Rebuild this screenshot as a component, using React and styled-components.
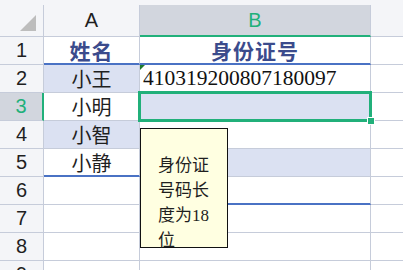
import React from "react";
import styled, { createGlobalStyle, css } from "styled-components";

const Global = createGlobalStyle`
  html, body {
    margin: 0;
    padding: 0;
    background: #ffffff;
    overflow: hidden;
  }
`;

const GRID = "#c6ccda";
const GREEN = "#21b07a";
const BAND = "#dbe1f2";
const EDGE = "#4a72c4";

const Sheet = styled.div`
  position: relative;
  width: 403px;
  height: 270px;
  background: #ffffff;
  overflow: hidden;
`;

const TopStrip = styled.div`
  height: 5px;
  background: #f4f5f8;
`;

const Grid = styled.div`
  display: grid;
  grid-template-columns: 44px 96px 231px 32px;
  grid-template-rows: 32px repeat(9, 28px);
`;

const Corner = styled.div`
  position: relative;
  background: #f4f5f8;
  border-right: 1px solid ${GRID};
  border-bottom: 1px solid ${GRID};
  svg {
    position: absolute;
    right: 7px;
    bottom: 5px;
  }
`;

const ColHead = styled.div`
  display: flex;
  align-items: center;
  justify-content: center;
  background: ${(p) => (p.$active ? "#d2d6de" : "#f4f5f8")};
  color: ${(p) => (p.$active ? GREEN : "#1f1f1f")};
  border-right: 1px solid ${GRID};
  border-bottom: ${(p) => (p.$active ? `2px solid ${GREEN}` : `1px solid ${GRID}`)};
  font-family: "Liberation Sans", Arial, sans-serif;
  font-size: 20px;
  ${(p) => p.$blank && css`border-right: none;`}
`;

const RowHead = styled.div`
  display: flex;
  align-items: center;
  justify-content: center;
  background: ${(p) => (p.$active ? "#d2d6de" : "#f4f5f8")};
  color: ${(p) => (p.$active ? GREEN : "#1f1f1f")};
  border-right: ${(p) => (p.$active ? `2px solid ${GREEN}` : `1px solid ${GRID}`)};
  border-bottom: 1px solid ${GRID};
  font-family: "Liberation Sans", Arial, sans-serif;
  font-size: 20px;
  box-sizing: border-box;
`;

const Cell = styled.div`
  position: relative;
  box-sizing: border-box;
  display: flex;
  align-items: center;
  justify-content: ${(p) => (p.$left ? "flex-start" : "center")};
  padding-left: ${(p) => (p.$left ? "3px" : "0")};
  background: ${(p) => (p.$band ? BAND : "#ffffff")};
  border-right: 1px solid ${GRID};
  border-bottom: 1px solid ${(p) => (p.$edge ? EDGE : GRID)};
  ${(p) => p.$edge && css`border-bottom-width: 2px;`}
  font-family: "Noto Sans CJK SC", sans-serif;
  font-size: 20px;
  color: #1f1f1f;
  white-space: nowrap;
  ${(p) => p.$title && css`
    font-weight: 700;
    color: #3b4b8c;
    font-size: 21px;
    letter-spacing: 1px;
  `}
  ${(p) => p.$num && css`
    font-family: "Liberation Serif", "Times New Roman", serif;
    font-size: 21.5px;
    color: #111111;
  `}
  ${(p) => p.$outer && css`border-right: none;`}
  ${(p) => p.$active && css`z-index: 2;`}
`;

const Selection = styled.div`
  position: absolute;
  left: -2px;
  top: -2px;
  right: -2px;
  bottom: -2px;
  border: 3px solid ${GREEN};
  pointer-events: none;
`;

const Handle = styled.div`
  position: absolute;
  right: -6px;
  bottom: -6px;
  width: 6px;
  height: 6px;
  background: ${GREEN};
  border: 1px solid #ffffff;
`;

const Marker = styled.div`
  position: absolute;
  left: 0;
  top: 0;
  width: 0;
  height: 0;
  border-top: 5px solid #1f7a2e;
  border-right: 5px solid transparent;
`;

const Comment = styled.div`
  position: absolute;
  z-index: 3;
  left: 140px;
  top: 128px;
  width: 88px;
  height: 120px;
  box-sizing: border-box;
  padding: 24px 14px 0 17px;
  background: #ffffe1;
  border: 1px solid #111111;
  font-family: "Liberation Serif", "Noto Sans CJK SC", serif;
  font-size: 17px;
  line-height: 25px;
  color: #1f1f1f;
  word-break: break-all;
`;

const CommentText = styled.div`
  width: 55px;
`;

const rows = [
  { n: 1, a: "姓名", b: "", aBand: false, bBand: false, title: true, aEdge: true, bEdge: true },
  { n: 2, a: "小王", b: "410319200807180097", aBand: true, bBand: false, marker: true },
  { n: 3, a: "小明", b: "", aBand: false, bBand: true, active: true },
  { n: 4, a: "小智", b: "", aBand: true, bBand: false },
  { n: 5, a: "小静", b: "", aBand: false, bBand: true, aEdge: true },
  { n: 6, a: "", b: "", bEdge: true },
  { n: 7, a: "", b: "" },
  { n: 8, a: "", b: "" },
  { n: 9, a: "", b: "" },
];

const App = () => {
  return (
    <Sheet>
      <Global />
      <TopStrip />
      <Grid>
        <Corner>
          <svg width="16" height="16" viewBox="0 0 16 16">
            <polygon points="16,0 16,16 0,16" fill="#bdbdbd" />
          </svg>
        </Corner>
        <ColHead>A</ColHead>
        <ColHead $active>B</ColHead>
        <ColHead $blank />
        {rows.map((r) => (
          <React.Fragment key={r.n}>
            <RowHead $active={r.active}>{r.n}</RowHead>
            <Cell $band={r.aBand} $edge={r.aEdge} $title={r.title}>
              {r.a}
            </Cell>
            <Cell
              $band={r.bBand}
              $edge={r.bEdge}
              $title={r.title}
              $left={!r.title}
              $num={!!r.b}
              $active={r.active}
            >
              {r.title ? "身份证号" : r.b}
              {r.marker && <Marker />}
              {r.active && (
                <Selection>
                  <Handle />
                </Selection>
              )}
            </Cell>
            <Cell $outer />
          </React.Fragment>
        ))}
      </Grid>
      <Comment>
        <CommentText>身份证号码长度为18位</CommentText>
      </Comment>
    </Sheet>
  );
};

export default App;
